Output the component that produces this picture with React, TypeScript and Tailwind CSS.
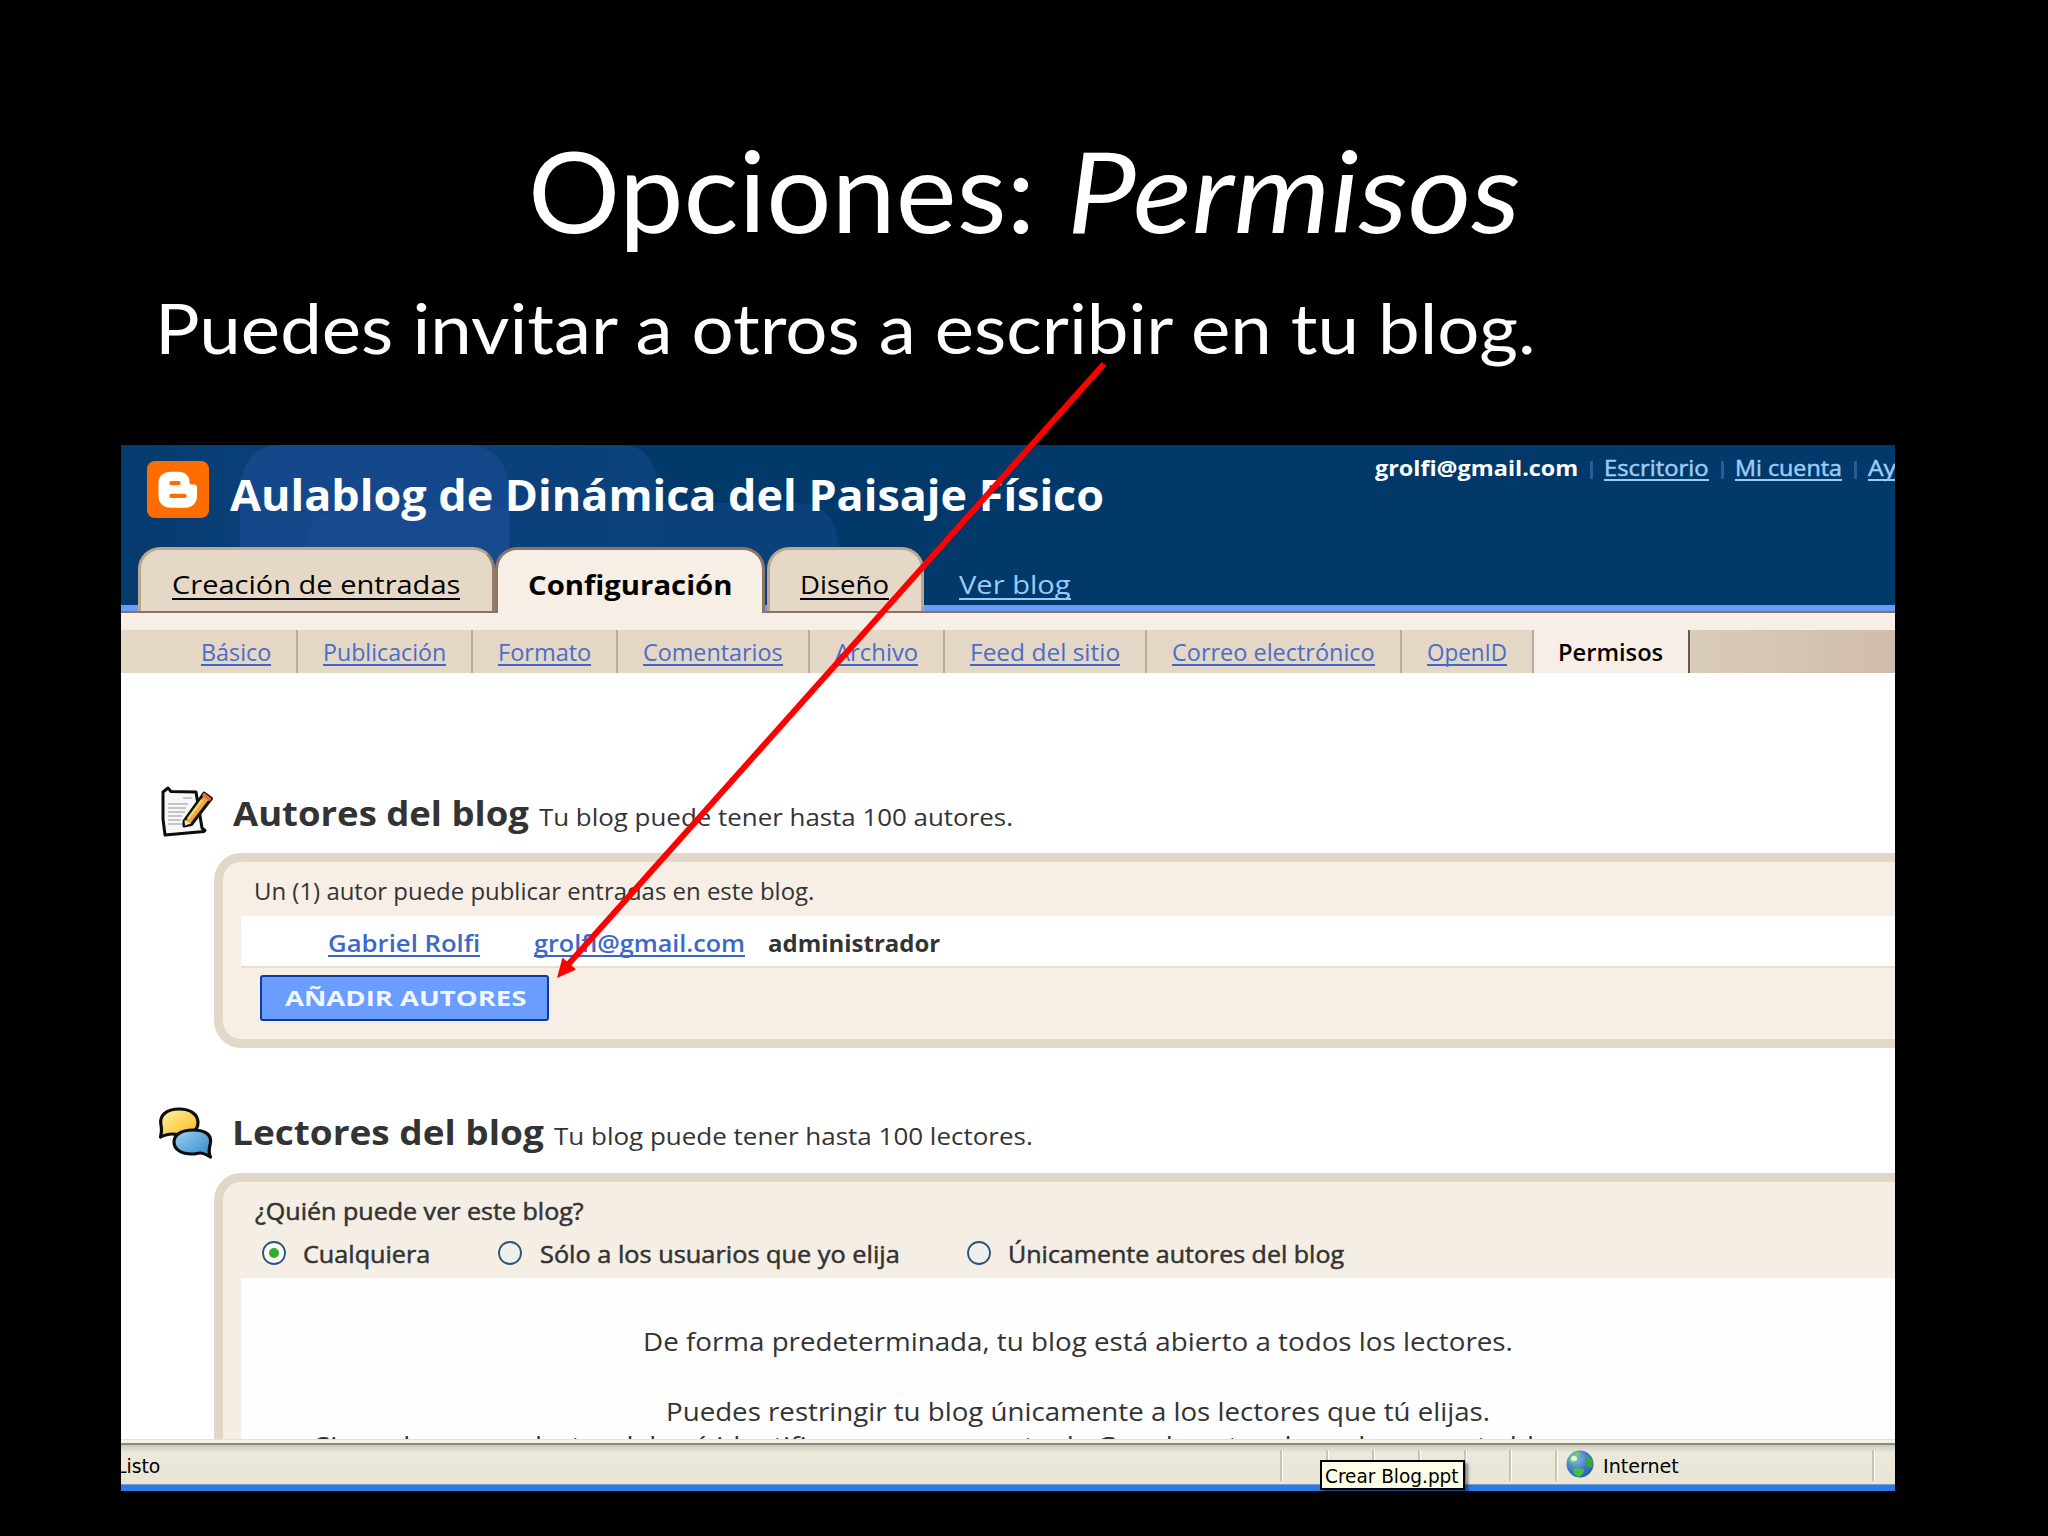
import { useLayoutEffect, useRef, useState } from 'react';
import type { ReactNode } from 'react';

interface FitProps {
  w: number;
  className?: string;
  children: ReactNode;
}

// One line of text stretched to a given width
function Fit({ w, className = '', children }: FitProps) {
  const inner = useRef<HTMLSpanElement>(null);
  const [scale, setScale] = useState(1);

  useLayoutEffect(() => {
    if (inner.current) setScale(w / inner.current.offsetWidth);
  }, [w]);

  return (
    <span className={`inline-block flex-shrink-0 whitespace-nowrap text-left ${className}`} style={{ width: w }}>
      <span ref={inner} className="inline-block origin-left" style={{ transform: `scaleX(${scale})` }}>
        {children}
      </span>
    </span>
  );
}

const SUBNAV = [
  { label: 'Básico', w: 70, pad: 'pl-[80px]' },
  { label: 'Publicación', w: 123, pad: 'pl-[25px]' },
  { label: 'Formato', w: 93, pad: 'pl-[25px]' },
  { label: 'Comentarios', w: 140, pad: 'pl-[25px]' },
  { label: 'Archivo', w: 83, pad: 'pl-[25px]' },
  { label: 'Feed del sitio', w: 150, pad: 'pl-[25px]' },
  { label: 'Correo electrónico', w: 203, pad: 'pl-[25px]' },
  { label: 'OpenID', w: 80, pad: 'pl-[25px]' },
];

const STATUS_CELLS = ['w-[46px]', 'w-[46px]', 'w-[46px]', 'w-[46px]', 'w-[45px]', 'w-[46px]'];

function BloggerLogo() {
  return (
    <svg className="w-[62px] h-[57px] flex-shrink-0" viewBox="0 0 62 58" preserveAspectRatio="none">
      <rect width="62" height="58" rx="8" fill="#ff6c00" />
      <path
        fill="#fff"
        d="M24 11h7c7 0 11.500 4 11.500 10 0 2 .8 3 2.500 3h2c1.800 0 3 1 3 3v8c0 8-5 12.500-12 12.500H24c-8 0-12.500-5-12.500-12.500V23c0-8 5-12 12.500-12z"
      />
      <path stroke="#ff6c00" strokeWidth="4.500" strokeLinecap="round" d="M24.500 22.500h7M24.500 35.500h13" />
    </svg>
  );
}

function HeaderPattern() {
  return (
    <svg className="absolute inset-0 w-full h-full" viewBox="0 0 1774 168" preserveAspectRatio="none">
      <defs>
        <linearGradient id="edge" x1="0" x2="1">
          <stop offset="0" stopColor="#053a6c" />
          <stop offset="0.200" stopColor="#083f76" />
          <stop offset="1" stopColor="#0b427c" />
        </linearGradient>
      </defs>
      <rect width="1774" height="168" fill="#01396b" />
      <path d="M0 0H500C526 0 537 20 537 48V168H0z" fill="url(#edge)" />
      <path d="M537 58H676C704 58 718 76 718 106V168H537z" fill="#0b417b" />
      <path d="M119 168V48C119 18 134 0 160 0H345C374 0 388 20 388 48V168z" fill="#14488b" />
      <path d="M183 168V112C183 82 200 62 228 62H388V168z" fill="#184a8f" />
    </svg>
  );
}

function NotepadIcon() {
  return (
    <svg className="w-[56px] h-[54px] flex-shrink-0" viewBox="0 0 56 54">
      <path
        d="M4 7L9 3l3 3.500 25 .5 6 36 3 2.500-1 1L6 50 4 34z"
        fill="#f7f7f7" stroke="#0c0c0c" strokeWidth="3" strokeLinejoin="round"
      />
      <path
        d="M24 13h9M9 19h20M9 23h18M9 27h17M9 31h14M9 35h13M9 39h20"
        stroke="#b5b5b5" strokeWidth="1.600"
      />
      <path d="M25 36L45 8l7.500 5.500-20 26L25 41z" fill="#e8a93a" stroke="#111" strokeWidth="3" strokeLinejoin="round" />
      <path d="M25.500 35l6.500 3.500-6 2z" fill="#f3e3c0" />
      <path d="M43 10.500l2-3 7.500 6-2 3z" fill="#e86a4a" />
      <path d="M29 34L43 15" stroke="#f9cf6f" strokeWidth="2.500" />
    </svg>
  );
}

function BubblesIcon() {
  return (
    <svg className="w-[56px] h-[54px] flex-shrink-0" viewBox="0 0 56 54">
      <defs>
        <linearGradient id="yellow" x1="0" y1="0" x2="1" y2="1">
          <stop offset="0" stopColor="#fff3a8" />
          <stop offset="0.600" stopColor="#fbd050" />
          <stop offset="1" stopColor="#eeb12c" />
        </linearGradient>
        <linearGradient id="blue" x1="0" y1="0" x2="1" y2="1">
          <stop offset="0" stopColor="#9fd2f3" />
          <stop offset="1" stopColor="#3187ca" />
        </linearGradient>
      </defs>
      <path
        d="M2.500 32C3.500 28 4 25 3 20 1 10 9 4 21 4c11 0 19 5 19 13.500 0 8-7 12.500-17 12.500-4 0-6-1-9-1-4 0-7 1-11.500 3z"
        fill="url(#yellow)" stroke="#0d0d0d" strokeWidth="3.200" strokeLinejoin="round"
      />
      <path
        d="M52.500 52c-2-4-1.500-8-.5-12C55 29 46 25 35 25c-12 0-19 5-19 12C16 45 24 49 34 49c4 0 5-1 8-1 4 0 7 2 10.500 4z"
        fill="url(#blue)" stroke="#0d0d0d" strokeWidth="3.200" strokeLinejoin="round"
      />
    </svg>
  );
}

function Globe() {
  return (
    <svg className="w-[28px] h-[28px] flex-shrink-0" viewBox="0 0 28 28">
      <defs>
        <radialGradient id="sea" cx="0.350" cy="0.300" r="0.800">
          <stop offset="0" stopColor="#8fb8ea" />
          <stop offset="0.600" stopColor="#3a78c4" />
          <stop offset="1" stopColor="#2b5a9c" />
        </radialGradient>
      </defs>
      <circle cx="14" cy="14" r="13.500" fill="url(#sea)" />
      <path d="M3 9c2-4 5-6 9-7 3 1 2 3 0 4 1 3-2 6-6 7-2 0-3-2-3-4z" fill="#6fd05c" />
      <path d="M20 8c2-2 4-1 5 0 2 4 2 7 1 9-2 1-5 0-6-2z" fill="#3aa838" />
      <path d="M7 19c3-2 8-1 11 1 0 3-2 5-5 7-4-1-6-4-6-8z" fill="#43c03c" />
      <ellipse cx="8" cy="8.500" rx="3" ry="2.500" fill="#eafbe4" />
    </svg>
  );
}

function Radio({ checked = false }: { checked?: boolean }) {
  return (
    <svg className="w-6 h-6 flex-shrink-0 -mt-0.5" viewBox="0 0 24 24">
      <circle cx="12" cy="12" r="11" fill={checked ? '#fbfcf9' : '#eff0ec'} stroke="#2b5578" strokeWidth="1.800" />
      {checked && <circle cx="12" cy="12" r="5" fill="#2fae2f" />}
    </svg>
  );
}

function Divider() {
  return <div className="w-[3px] h-[31px] flex-shrink-0 bg-[#c6c4b2] border-r border-white" />;
}

export default function App() {
  return (
    <div className="relative w-[2048px] h-[1536px] overflow-hidden bg-black font-['Open_Sans',sans-serif]">

      {/* Slide text */}
      <div className="h-[445px] pt-[134px] text-white font-['Lato',sans-serif]">
        <h1 className="flex pl-[528px] h-[112px] text-[112px] leading-[112px]">
          <Fit w={507}>Opciones:</Fit>
          <Fit w={454} className="italic ml-[32px]">Permisos</Fit>
        </h1>
        <p className="flex pl-[155px] mt-[46px] text-[70px] leading-[70px]">
          <Fit w={1381}>Puedes invitar a otros a escribir en tu blog.</Fit>
        </p>
      </div>

      {/* Browser capture */}
      <div className="ml-[121px] w-[1774px] h-[1046px] overflow-hidden bg-white flex flex-col">

        <header className="relative h-[168px] flex-shrink-0 overflow-hidden">
          <HeaderPattern />
          <div className="absolute inset-x-0 bottom-0 h-2 bg-[#6b9bfb] border-b-2 border-[#857565]" />
          <div className="relative h-[102px] pl-[26px] flex items-start">
            <div className="pt-4"><BloggerLogo /></div>
            <Fit w={874} className="ml-[21px] mt-7 text-[43px] leading-[43px] font-bold text-white">
              Aulablog de Dinámica del Paisaje Físico
            </Fit>
            <nav className="flex items-start ml-[271px] mt-[11px] text-[22px] leading-[22px] text-[#9ccbf8]">
              <Fit w={203} className="font-bold text-white">grolfi@gmail.com</Fit>
              <span className="w-[3px] h-[18px] mt-[5px] ml-[12px] mr-[11px] bg-[#285c90]" />
              <Fit w={105} className="border-b-2 border-[#9ccbf8] h-[25px] [-webkit-text-stroke:0.5px]">Escritorio</Fit>
              <span className="w-[3px] h-[18px] mt-[5px] ml-[12px] mr-[11px] bg-[#285c90]" />
              <Fit w={107} className="border-b-2 border-[#9ccbf8] h-[25px] [-webkit-text-stroke:0.5px]">Mi cuenta</Fit>
              <span className="w-[3px] h-[18px] mt-[5px] ml-[12px] mr-[11px] bg-[#285c90]" />
              <Fit w={28} className="border-b-2 border-[#9ccbf8] h-[25px] [-webkit-text-stroke:0.5px]">Ay</Fit>
            </nav>
          </div>

          <div className="relative flex items-start pl-[17px] text-[26px] leading-[26px] text-black">
            <div className="w-[357px] h-16 pl-[31px] pt-[21px] rounded-t-[22px] border-[3px] border-b-0 border-[#bba691] border-r-[#957f6c] bg-[#e6d8c6]">
              <Fit w={288} className="border-b-2 border-black h-[29px]">Creación de entradas</Fit>
            </div>
            <div className="w-[270px] h-[66px] pl-[30px] pt-[22px] rounded-t-[22px] border-[3px] border-b-0 border-[#8b7663] bg-[#f7efe6]">
              <Fit w={205} className="font-bold">Configuración</Fit>
            </div>
            <div className="w-[157px] h-16 ml-[2px] pl-[30px] pt-[21px] rounded-t-[22px] border-[3px] border-b-0 border-[#bba691] bg-[#e6d8c6]">
              <Fit w={89} className="border-b-2 border-black h-[29px]">Diseño</Fit>
            </div>
            <Fit w={112} className="ml-[35px] mt-6 border-b-2 border-[#9ccbf8] h-[29px] text-[#9ccbf8]">Ver blog</Fit>
          </div>
        </header>

        <nav className="flex-shrink-0 h-[60px] pt-[17px] bg-[#f7efe7] flex text-[23px] leading-[22px]">
          {SUBNAV.map(item => (
            <div key={item.label} className={`${item.pad} pt-[11px] pr-[25px] h-[43px] border-r-2 border-[#b9ae9e] bg-[#e4d7c6]`}>
              <Fit w={item.w} className="border-b-2 border-[#3f68c6] h-[25px] text-[#4a6ec8]">{item.label}</Fit>
            </div>
          ))}
          <div className="pl-6 pr-[25px] pt-[11px] h-[43px] border-r-2 border-[#5f5a54]">
            <Fit w={105} className="font-semibold text-black">Permisos</Fit>
          </div>
          <div className="flex-1 h-[43px] bg-gradient-to-r from-[#d9ccb8] to-[#d0bcab]" />
        </nav>

        <main className="h-[766px] flex-shrink-0 overflow-hidden pt-[112px] text-[#333]">

          {/* Authors */}
          <section>
            <div className="flex h-[68px] pl-[38px]">
              <NotepadIcon />
              <div className="flex items-baseline pl-[18px] pt-[11px] leading-[34px]">
                <Fit w={296} className="text-[34px] font-bold">Autores del blog</Fit>
                <Fit w={474} className="ml-[10px] text-[23px]">Tu blog puede tener hasta 100 autores.</Fit>
              </div>
            </div>
            <div className="ml-[93px] h-[195px] rounded-l-[27px] border-[9px] border-r-0 border-[#e3d7c7] bg-[#f7eee5] text-[23px] leading-[23px]">
              <div className="h-[54px] pl-[31px] pt-[18px]">
                <Fit w={560}>Un (1) autor puede publicar entradas en este blog.</Fit>
              </div>
              <div className="ml-[18px] h-[52px] pl-[87px] pt-[16px] flex items-start bg-white border-b-2 border-[#e8dfd0] font-semibold">
                <Fit w={152} className="border-b-2 border-[#3a64c0] h-[25px] text-[#3b68cc]">Gabriel Rolfi</Fit>
                <Fit w={211} className="ml-[54px] border-b-2 border-[#3a64c0] h-[25px] text-[#3b68cc]">grolfi@gmail.com</Fit>
                <Fit w={172} className="ml-[23px] font-bold">administrador</Fit>
              </div>
              <button className="flex items-start ml-[37px] mt-[7px] w-[289px] h-[46px] pl-[23px] pt-[10px] rounded-[3px] border-2 border-[#0b3a9a] bg-[#6b9dff] text-[21px] leading-[23px] font-bold text-[#f3f6ff]">
                <Fit w={241}>AÑADIR AUTORES</Fit>
              </button>
            </div>
          </section>

          {/* Readers */}
          <section className="pt-[57px]">
            <div className="flex h-[68px] pl-[37px]">
              <BubblesIcon />
              <div className="flex items-baseline pl-[18px] pt-[10px] leading-[34px]">
                <Fit w={312} className="text-[34px] font-bold">Lectores del blog</Fit>
                <Fit w={479} className="ml-[10px] text-[23px]">Tu blog puede tener hasta 100 lectores.</Fit>
              </div>
            </div>
            <div className="ml-[93px] h-[300px] rounded-tl-[27px] border-t-[9px] border-l-[9px] border-[#e2d6c6] bg-[#f5eee5] text-[23px] leading-[23px]">
              <div className="h-24 pt-[18px] pl-[32px] [-webkit-text-stroke:0.5px]">
                <Fit w={329} className="h-[23px]">¿Quién puede ver este blog?</Fit>
                <div className="flex items-start mt-5 pl-[7px]">
                  <Radio checked />
                  <Fit w={127} className="ml-[17px]">Cualquiera</Fit>
                  <span className="w-[68px]" />
                  <Radio />
                  <Fit w={360} className="ml-[18px]">Sólo a los usuarios que yo elija</Fit>
                  <span className="w-[67px]" />
                  <Radio />
                  <Fit w={336} className="ml-[17px]">Únicamente autores del blog</Fit>
                </div>
              </div>
              <div className="ml-[18px] h-[200px] pt-[50px] bg-[#fefefe] text-[26px] leading-[26px]">
                <div className="flex pl-[402px]"><Fit w={870}>De forma predeterminada, tu blog está abierto a todos los lectores.</Fit></div>
                <div className="flex pl-[425px] mt-11"><Fit w={824}>Puedes restringir tu blog únicamente a los lectores que tú elijas.</Fit></div>
                <div className="flex pl-[74px] mt-2"><Fit w={1258}>Sin embargo, un lector deberá identificarse en su cuenta de Google antes de poder ver este blog.</Fit></div>
              </div>
            </div>
          </section>
        </main>

        {/* Status bar */}
        <footer className="flex-1 flex flex-col text-[19px] leading-[20px] text-black font-['DejaVu_Sans_Condensed','DejaVu_Sans',sans-serif]">
          <div className="h-[4px] bg-[#f6f4e8] border-t border-[#e6e2d0]" />
          <div className="h-[41px] border-t-2 border-[#8d8b7c] bg-gradient-to-b from-[#cbc9b8] via-[#ece9da] via-20% to-[#e8e5d6] flex items-start">
            <Fit w={44} className="-ml-[5px] mt-[11px]">Listo</Fit>
            <div className="flex items-start pt-[5px] ml-[1120px]">
              {STATUS_CELLS.map((cell, i) => (
                <div key={i} className={cell}><Divider /></div>
              ))}
              <Divider />
              <div className="flex items-start w-[314px] pl-[8px]">
                <Globe />
                <Fit w={76} className="ml-[9px] mt-[6px]">Internet</Fit>
              </div>
              <Divider />
            </div>
          </div>
          <div className="h-[7px] bg-[#2b7be4] border-t border-[#7d9fc4]" />
        </footer>
      </div>

      {/* Taskbar tooltip */}
      <div className="absolute left-[1320px] top-[1460px] w-[145px] h-[30px] pl-[3px] pt-[4px] border-2 border-black bg-[#ffffe8] text-[19px] leading-[20px] text-black shadow-[3px_3px_3px_rgba(0,0,0,0.45)] font-['DejaVu_Sans_Condensed','DejaVu_Sans',sans-serif]">
        <Fit w={134}>Crear Blog.ppt</Fit>
      </div>

      {/* Arrow to the button */}
      <svg className="absolute inset-0 w-full h-full pointer-events-none" viewBox="0 0 2048 1536">
        <path d="M1104 364L565 968" stroke="#ff0000" strokeWidth="6" />
        <path d="M557 978l5.500-20.500 13.500 12z" fill="#ff0000" />
      </svg>
    </div>
  );
}
